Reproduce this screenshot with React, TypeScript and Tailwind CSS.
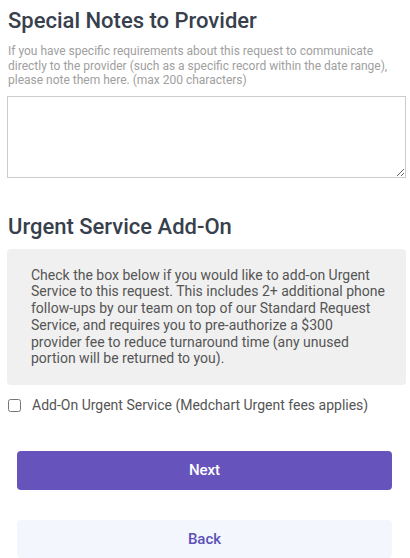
export default function App() {
  return (
    <div className="w-[410px] h-[558px] overflow-hidden bg-white font-['Roboto',sans-serif]">
      <div className="pl-[7px] pr-[4px] pt-[7px]">
        {/* Special notes */}
        <h2 className="text-[22px] leading-[28px] font-medium text-[#37404c] pl-px">
          Special Notes to Provider
        </h2>
        <p className="mt-[9px] pl-px text-[12px] leading-[14.5px] text-[#a0a0a0] pr-[4px]">
          If you have specific requirements about this request to communicate directly to the
          provider (such as a specific record within the date range), please note them here.
          (max 200 characters)
        </p>
        <textarea
          className="mt-[8px] block w-full h-[82px] border border-[#cccccc] bg-white resize-y outline-none"
        />

        {/* Urgent service */}
        <h2 className="mt-[35px] text-[22px] leading-[28px] font-medium text-[#37404c] pl-px">
          Urgent Service Add-On
        </h2>
        <div className="mt-[8px] rounded-[4px] bg-[#f0f0f0] pl-[24px] pr-[8px] pt-[18px] pb-[18px]">
          <p className="text-[14px] leading-[16.8px] text-[#555555] whitespace-nowrap">
            Check the box below if you would like to add-on Urgent
            <br />
            Service to this request. This includes 2+ additional phone
            <br />
            follow-ups by our team on top of our Standard Request
            <br />
            Service, and requires you to pre-authorize a $300
            <br />
            provider fee to reduce turnaround time (any unused
            <br />
            portion will be returned to you).
          </p>
        </div>
        <label className="mt-[12px] flex items-center gap-[11px] pl-px">
          <input
            type="checkbox"
            className="w-[13px] h-[13px] m-0 accent-[#6654bc]"
          />
          <span className="text-[14px] leading-[16.8px] text-[#555555]">
            Add-On Urgent Service (Medchart Urgent fees applies)
          </span>
        </label>

        {/* Actions */}
        <div className="mt-[37px] px-[10px] flex flex-col gap-[30px] pr-[14px]">
          <button className="h-[39px] w-full rounded-[4px] bg-[#6654bc] text-white text-[15px] font-medium">
            Next
          </button>
          <button className="h-[38px] w-full rounded-[4px] bg-[#f3f6fc] text-[#5d50b8] text-[15px] font-medium">
            Back
          </button>
        </div>
      </div>
    </div>
  );
}
